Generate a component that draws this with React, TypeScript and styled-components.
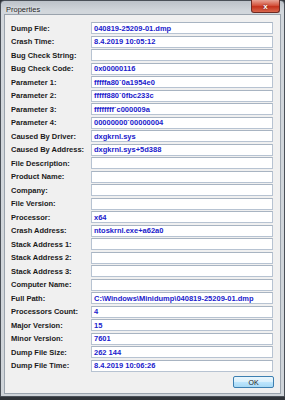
import { Fragment } from "react";
import styled, { createGlobalStyle } from "styled-components";

const GlobalStyle = createGlobalStyle`
  html, body {
    margin: 0;
    padding: 0;
    background: #2f3338;
    width: 285px;
    height: 400px;
    overflow: hidden;
  }
`;

const Window = styled.div`
  width: 285px;
  height: 397px;
  box-sizing: border-box;
  border: 1px solid #4a5058;
  border-radius: 4px 4px 0 0;
  background: linear-gradient(to bottom, #bcc2c9 0px, #d2d7dc 10px, #cfd4d9 100%);
  display: flex;
  flex-direction: column;
  padding: 0 3px 3px 3px;
  font-family: "Liberation Sans", Arial, sans-serif;
`;

const TitleBar = styled.div`
  height: 15px;
  display: flex;
  align-items: flex-start;
  justify-content: space-between;
`;

const Title = styled.span`
  font-size: 7.5px;
  color: #1e1e1e;
  padding: 4px 0 0 2px;
  text-shadow: 0 0 3px #fff;
`;

const CloseButton = styled.div`
  width: 27px;
  height: 12px;
  margin-right: 1px;
  margin-top: -1px;
  border: 1px solid #6e2a22;
  border-top: none;
  border-radius: 0 0 3px 3px;
  background: linear-gradient(to bottom, #e8a597 0%, #d4543e 45%, #c4321c 55%, #d9674d 100%);
  display: flex;
  align-items: center;
  justify-content: center;
  color: #fff;
  font-size: 8px;
  font-weight: bold;
  text-shadow: 0 0 2px #5a1a10;
`;

const Client = styled.div`
  flex: 1;
  background: #f0f0f0;
  border: 1px solid #9aa3ad;
  padding: 7px 6px 5px 6px;
  display: flex;
  flex-direction: column;
`;

const Grid = styled.div`
  display: grid;
  grid-template-columns: 80px 182px;
  grid-auto-rows: 12px;
  row-gap: 1.5px;
`;

const Label = styled.div`
  font-size: 7.5px;
  font-weight: bold;
  color: #1a1a1a;
  display: flex;
  align-items: center;
  white-space: nowrap;
`;

const Field = styled.div`
  box-sizing: border-box;
  border: 1px solid #b7c3d2;
  border-top-color: #a8b4c2;
  background: #ffffff;
  font-size: 7.5px;
  font-weight: bold;
  color: #2020cc;
  display: flex;
  align-items: center;
  padding-left: 2px;
  white-space: nowrap;
  overflow: hidden;
`;

const Footer = styled.div`
  display: flex;
  justify-content: flex-end;
  margin-top: 4.5px;
`;

const OkButton = styled.button`
  width: 41px;
  height: 12px;
  box-sizing: border-box;
  border: 1px solid #3c7fb1;
  border-radius: 2px;
  background: linear-gradient(to bottom, #eaf6fd 0%, #d9f0fc 50%, #bee6fd 51%, #a7d9f5 100%);
  font-family: "Liberation Sans", Arial, sans-serif;
  font-size: 7px;
  color: #1a1a1a;
  padding: 0;
  display: flex;
  align-items: center;
  justify-content: center;
`;

const rows: [string, string][] = [
  ["Dump File:", "040819-25209-01.dmp"],
  ["Crash Time:", "8.4.2019 10:05:12"],
  ["Bug Check String:", ""],
  ["Bug Check Code:", "0x00000116"],
  ["Parameter 1:", "fffffa80`0a1954e0"],
  ["Parameter 2:", "fffff880`0fbc233c"],
  ["Parameter 3:", "ffffffff`c000009a"],
  ["Parameter 4:", "00000000`00000004"],
  ["Caused By Driver:", "dxgkrnl.sys"],
  ["Caused By Address:", "dxgkrnl.sys+5d388"],
  ["File Description:", ""],
  ["Product Name:", ""],
  ["Company:", ""],
  ["File Version:", ""],
  ["Processor:", "x64"],
  ["Crash Address:", "ntoskrnl.exe+a62a0"],
  ["Stack Address 1:", ""],
  ["Stack Address 2:", ""],
  ["Stack Address 3:", ""],
  ["Computer Name:", ""],
  ["Full Path:", "C:\\Windows\\Minidump\\040819-25209-01.dmp"],
  ["Processors Count:", "4"],
  ["Major Version:", "15"],
  ["Minor Version:", "7601"],
  ["Dump File Size:", "262 144"],
  ["Dump File Time:", "8.4.2019 10:06:26"],
];

export default function App() {
  return (
    <>
      <GlobalStyle />
      <Window>
        <TitleBar>
          <Title>Properties</Title>
          <CloseButton>x</CloseButton>
        </TitleBar>
        <Client>
          <Grid>
            {rows.map(([label, value]) => (
              <Fragment key={label}>
                <Label>{label}</Label>
                <Field>{value}</Field>
              </Fragment>
            ))}
          </Grid>
          <Footer>
            <OkButton>OK</OkButton>
          </Footer>
        </Client>
      </Window>
    </>
  );
}
